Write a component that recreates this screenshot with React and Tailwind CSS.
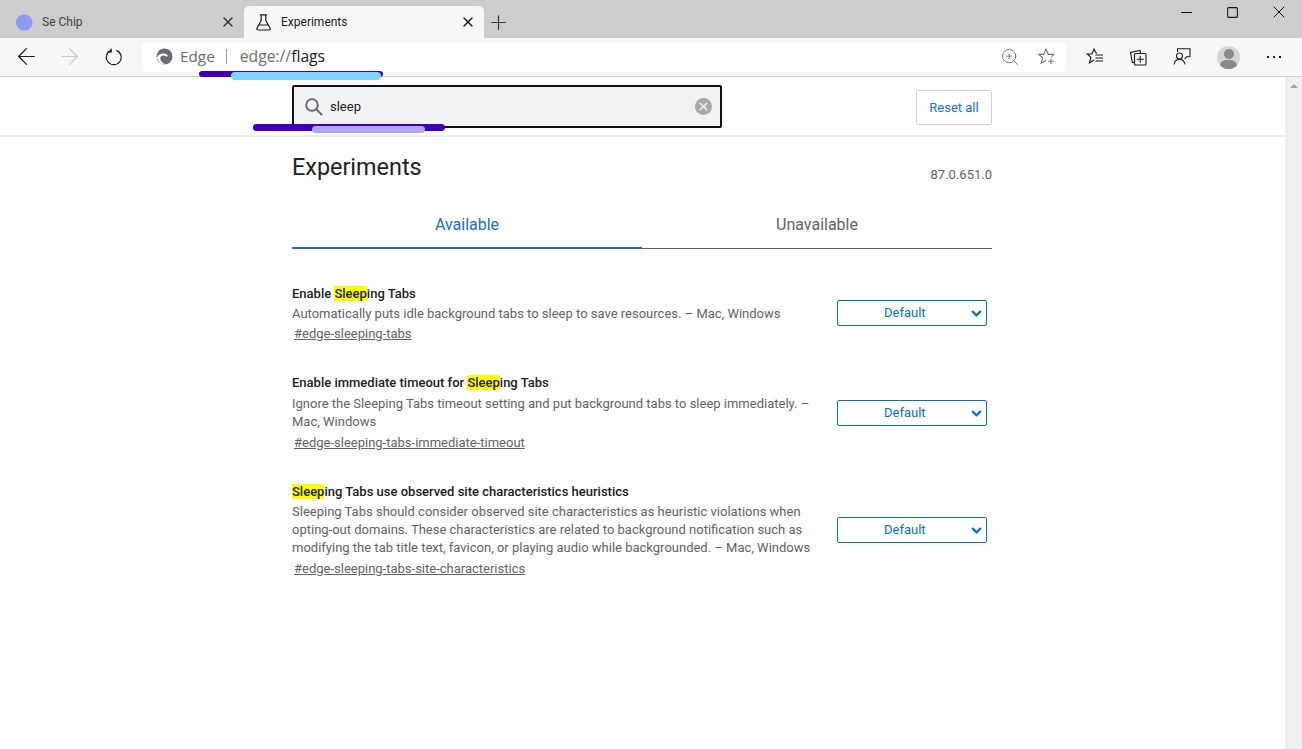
import React from 'react';
import { ArrowLeft, ArrowRight, X, Plus, ChevronDown, ZoomIn, Minus, Square } from 'lucide-react';

// Opciones de experimentos
const flags = [
  {
    pre: 'Enable ',
    post: 'ing Tabs',
    match: 'Sleep',
    desc: ['Automatically puts idle background tabs to sleep to save resources. – Mac, Windows'],
    link: '#edge-sleeping-tabs',
    cls: 'h-[89px]',
    descCls: 'mt-[3px]',
    selectCls: '-mt-[5px] -mb-[3px]',
    linkCls: 'mt-[2px]',
  },
  {
    pre: 'Enable immediate timeout for ',
    post: 'ing Tabs',
    match: 'Sleep',
    desc: ['Ignore the Sleeping Tabs timeout setting and put background tabs to sleep immediately. –', 'Mac, Windows'],
    link: '#edge-sleeping-tabs-immediate-timeout',
    cls: 'h-[109px]',
    descCls: 'mt-[4px]',
    selectCls: '',
    linkCls: 'mt-[3px]',
  },
  {
    pre: '',
    post: 'ing Tabs use observed site characteristics heuristics',
    match: 'Sleep',
    desc: [
      'Sleeping Tabs should consider observed site characteristics as heuristic violations when',
      'opting-out domains. These characteristics are related to background notification such as',
      'modifying the tab title text, favicon, or playing audio while backgrounded. – Mac, Windows',
    ],
    link: '#edge-sleeping-tabs-site-characteristics',
    cls: 'h-[110px]',
    descCls: 'mt-[3px]',
    selectCls: '',
    linkCls: 'mt-[3px]',
  },
];

const EdgeLogo = () => (
  <svg width="17" height="17" viewBox="0 0 17 17" className="shrink-0">
    <circle cx="8.5" cy="8.5" r="8" fill="#6b6e70" />
    <path d="M1 9.5C2.2 6.4 5.6 5 8.4 5.6c2 .4 3.4 1.5 3.4 2.6-1.4.5-2.6.2-3.2-.4-1.6-.8-3.6-.2-4.2 1.6-.6 2.2.8 4.6 3.2 6 .8.4 1.6.6 2.4.6-4.4 1-8-1.6-9-6.5z" fill="#fff" />
  </svg>
);

const FlaskIcon = () => (
  <svg width="15" height="17" viewBox="0 0 15 17" fill="none" stroke="#1b1b1b" strokeWidth="1.2" className="shrink-0">
    <path d="M4 .8h7M5.2.8v5.7L1 14a1.3 1.3 0 0 0 1.1 2h10.8a1.3 1.3 0 0 0 1.1-2L9.8 6.5V.8M3.2 11h8.6" />
  </svg>
);

const ReloadIcon = () => (
  <svg width="18" height="18" viewBox="0 0 18 18" fill="none" stroke="#1b1b1b" strokeWidth="1.2">
    <path d="M11.5 2.4A7.4 7.4 0 1 1 6 2.4" />
    <path d="M6.2 .4v3.4H2.8" />
  </svg>
);

const SearchIcon = () => (
  <svg width="18" height="18" viewBox="0 0 18 18" fill="none" stroke="#5f6368" strokeWidth="1.8" className="shrink-0">
    <circle cx="7" cy="7" r="5.8" />
    <path d="M11.2 11.2 17 17" />
  </svg>
);

const FavoritesIcon = () => (
  <svg width="18" height="18" viewBox="0 0 18 18" fill="none" stroke="#1b1b1b" strokeWidth="1.1">
    <path d="M10.6 5.6 8 1.2 6 6H1.2l3.7 3.2-1.4 5.6L8.2 12" />
    <path d="M9.5 7h7.5M9.5 10h7.5M9.5 13h7.5" />
  </svg>
);

const CollectionsIcon = () => (
  <svg width="18" height="18" viewBox="0 0 18 18" fill="none" stroke="#1b1b1b" strokeWidth="1.1">
    <path d="M5 14.5H3.4L1.5 4.5 11 2.5l.6 2.5" />
    <rect x="5.5" y="5.5" width="11.5" height="11.5" rx="1" />
    <path d="M11.2 7.8v7M7.8 11.2h7" />
  </svg>
);

const FeedbackIcon = () => (
  <svg width="18" height="18" viewBox="0 0 18 18" fill="none" stroke="#1b1b1b" strokeWidth="1.1">
    <path d="M4.5 4V0.8H17v8h-3.5L11.7 11" />
    <circle cx="6.5" cy="8" r="3" />
    <path d="M1 16.5c.4-3 2.6-5 5.5-5s5 2 5.5 5" />
  </svg>
);

const FavoriteAddIcon = () => (
  <svg width="17" height="17" viewBox="0 0 17 17" fill="none" stroke="#6f6f6f" strokeWidth="1.1">
    <path d="M13.5 8.8 15.6 6.4H10.4L8 1.2 5.6 6.4H.6l4 3.4-1.4 5.4L8 12.4" />
    <path d="M13 10.5v5.5M10.2 13.2h5.6" />
  </svg>
);

export default function App() {
  return (
    <div className="w-[1302px] h-[749px] overflow-hidden flex flex-col bg-white font-['Roboto',sans-serif] relative">
      {/* Pestañas */}
      <div className="h-[38px] bg-[#cdcdcd] flex items-end shrink-0">
        <div className="w-[244px] h-[32px] flex items-center pl-4 pr-[8px] text-[#3f3f3f]">
          <svg width="17" height="17" viewBox="0 0 17 17" className="shrink-0">
            <path d="M8.5 0.5a8 8 0 0 1 8 8c0 4-2 6-4.5 7.5l-.6.8-.5-.9A8 8 0 1 1 8.5.5z" fill="#8c9bf2" />
          </svg>
          <span className="ml-[9px] text-[12px]">Se Chip</span>
          <X size={16} strokeWidth={2} className="ml-auto text-[#333]" />
        </div>
        <div className="w-[240px] h-[32px] bg-[#f7f7f7] rounded-t-[5px] flex items-center pl-[12px] pr-[8px] text-[#1b1b1b]">
          <FlaskIcon />
          <span className="ml-[10px] text-[12px]">Experiments</span>
          <X size={16} strokeWidth={2.2} className="ml-auto" />
        </div>
        <div className="h-[32px] flex items-center ml-[3px]">
          <Plus size={23} strokeWidth={1.25} className="text-[#333]" />
        </div>
        {/* Controles de ventana */}
        <div className="ml-auto h-[38px] flex items-center text-[#111] pr-[13px] pb-[14px]">
          <Minus size={17} strokeWidth={1.5} />
          <Square size={13} strokeWidth={1.9} className="ml-[31px]" />
          <X size={20} strokeWidth={1.2} className="ml-[30px]" />
        </div>
      </div>

      {/* Barra de direcciones */}
      <div className="h-[39px] bg-[#f7f7f7] border-b border-[#cfcfcf] flex items-center shrink-0 relative">
        <div className="w-[142px] flex items-center pl-[13px] pb-px">
          <ArrowLeft size={27} strokeWidth={1.1} className="text-[#1b1b1b]" />
          <ArrowRight size={27} strokeWidth={1.1} className="text-[#c8c8c8] ml-[16px]" />
          <div className="ml-[22px]"><ReloadIcon /></div>
        </div>
        <div className="w-[924px] h-[30px] bg-white rounded-[4px] flex items-center pl-[14px] pr-[11px] mb-px">
          <EdgeLogo />
          <span className="ml-[7px] text-[15.3px] text-[#6d6d6d] font-['Open_Sans',sans-serif]">Edge</span>
          <span className="ml-[11px] w-px h-[15px] bg-[#9b9b9b]" />
          <span className="ml-[13px] text-[15.7px] text-[#6d6d6d] font-['Open_Sans',sans-serif]">
            edge://<span className="text-[#1b1b1b]">flags</span>
          </span>
          <ZoomIn size={20} strokeWidth={1.1} className="ml-auto text-[#6f6f6f]" />
          <div className="ml-[18px]"><FavoriteAddIcon /></div>
        </div>
        <div className="flex-1 flex items-center pl-[20px]">
          <FavoritesIcon />
          <div className="ml-[25px]"><CollectionsIcon /></div>
          <div className="ml-[26px]"><FeedbackIcon /></div>
          <div className="ml-[26px] w-[23px] h-[23px] rounded-full bg-[#d8d6d3] overflow-hidden flex flex-col items-center">
            <div className="w-[10px] h-[10px] rounded-full bg-[#8a8a88] mt-[3px] shrink-0" />
            <div className="w-[17px] h-[12px] rounded-full bg-[#8a8a88] mt-[1px] shrink-0" />
          </div>
          <div className="flex gap-[4px] ml-[27px]">
            <span className="w-[2px] h-[2px] bg-[#1b1b1b]" />
            <span className="w-[2px] h-[2px] bg-[#1b1b1b]" />
            <span className="w-[2px] h-[2px] bg-[#1b1b1b]" />
          </div>
        </div>
      </div>

      {/* Página */}
      <div className="flex-1 flex min-h-0">
        <main className="flex-1 min-w-0 flex flex-col">
          {/* Cabecera con búsqueda */}
          <header className="h-[60px] border-b-2 border-[#ececec] pl-[292px] pt-[8px] shrink-0">
            <div className="w-[700px] flex items-start justify-between">
              <div className="w-[430px] h-[43px] border-2 border-[#111] rounded-[2px] bg-[#f1f2f4] flex items-center pl-[11px] pr-[8px]">
                <SearchIcon />
                <span className="ml-[7px] text-[13px] text-[#202124]">sleep</span>
                <span className="ml-auto w-[17px] h-[17px] rounded-full bg-[#a8a8a8] flex items-center justify-center">
                  <X size={13} strokeWidth={3} className="text-[#f1f2f4]" />
                </span>
              </div>
              <button className="mt-[5px] w-[76px] h-[35px] border border-[#cfd1d4] rounded-[2px] bg-white text-[13px] text-[#1a6fc9]">
                Reset all
              </button>
            </div>
          </header>

          <div className="pl-[292px] flex-1">
            <div className="w-[700px]">
              <div className="flex items-end justify-between h-[47px]">
                <h1 className="text-[23.4px] leading-[28px] text-[#202124] mb-[3px]">Experiments</h1>
                <span className="text-[13px] leading-[16px] text-[#5f6368] mb-[1px]">87.0.651.0</span>
              </div>

              {/* Tabs */}
              <div className="mt-[17px] flex h-[48px]">
                <div className="w-[350px] pt-[1px] border-b-2 border-[#1a6fc9] text-center text-[16px] leading-[46px] text-[#1a6fc9]">Available</div>
                <div className="w-[350px] pt-[1px] border-b border-[#5f6368] text-center text-[16px] leading-[46px] text-[#5f6368]">Unavailable</div>
              </div>

              {/* Lista de flags */}
              <div className="mt-[37px]">
                {flags.map((f) => (
                  <div key={f.link} className={`flex flex-col pr-[5px] ${f.cls}`}>
                    <div className="text-[13px] leading-[16px] font-medium text-[#202124]">
                      {f.pre}<mark className="bg-[#ffff00] text-[#202124]">{f.match}</mark>{f.post}
                    </div>
                    <div className={`flex items-center justify-between ${f.descCls}`}>
                      <div className="text-[13px] leading-[18px] text-[#5f6368]">
                        {f.desc.map((line) => <div key={line}>{line}</div>)}
                      </div>
                      <div className={`${f.selectCls || '-my-[4px]'} w-[150px] h-[26px] border border-[#0b6fc7] rounded-[2px] flex items-center pl-[46px] pr-[2px] text-[13px] text-[#0b6fc7] shrink-0`}>
                        <span>Default</span>
                        <ChevronDown size={15} strokeWidth={3.5} className="ml-auto" />
                      </div>
                    </div>
                    <a className={`${f.linkCls} ml-[2px] text-[13px] leading-[18px] text-[#5f6368] underline`}>{f.link}</a>
                  </div>
                ))}
              </div>
            </div>
          </div>
        </main>

        {/* Barra de desplazamiento */}
        <div className="w-[17px] bg-[#f0f0f0] flex justify-center pt-[7px] shrink-0">
          <span className="w-0 h-0 border-x-[4px] border-x-transparent border-b-[4px] border-b-[#a3a3a3]" />
        </div>
      </div>

      {/* Trazos de marcador */}
      <div className="absolute left-[199px] top-[71px] w-[184px] h-[6px] rounded-full bg-[#3d00b8]" />
      <div className="absolute left-[231px] top-[72px] w-[150px] h-[8px] rounded-full bg-[#83d3ff]" />
      <div className="absolute left-[253px] top-[124px] w-[192px] h-[7px] rounded-full bg-[#3d00b8]" />
      <div className="absolute left-[312px] top-[126px] w-[113px] h-[7px] rounded-full bg-[#b1a5ff]" />
    </div>
  );
}
